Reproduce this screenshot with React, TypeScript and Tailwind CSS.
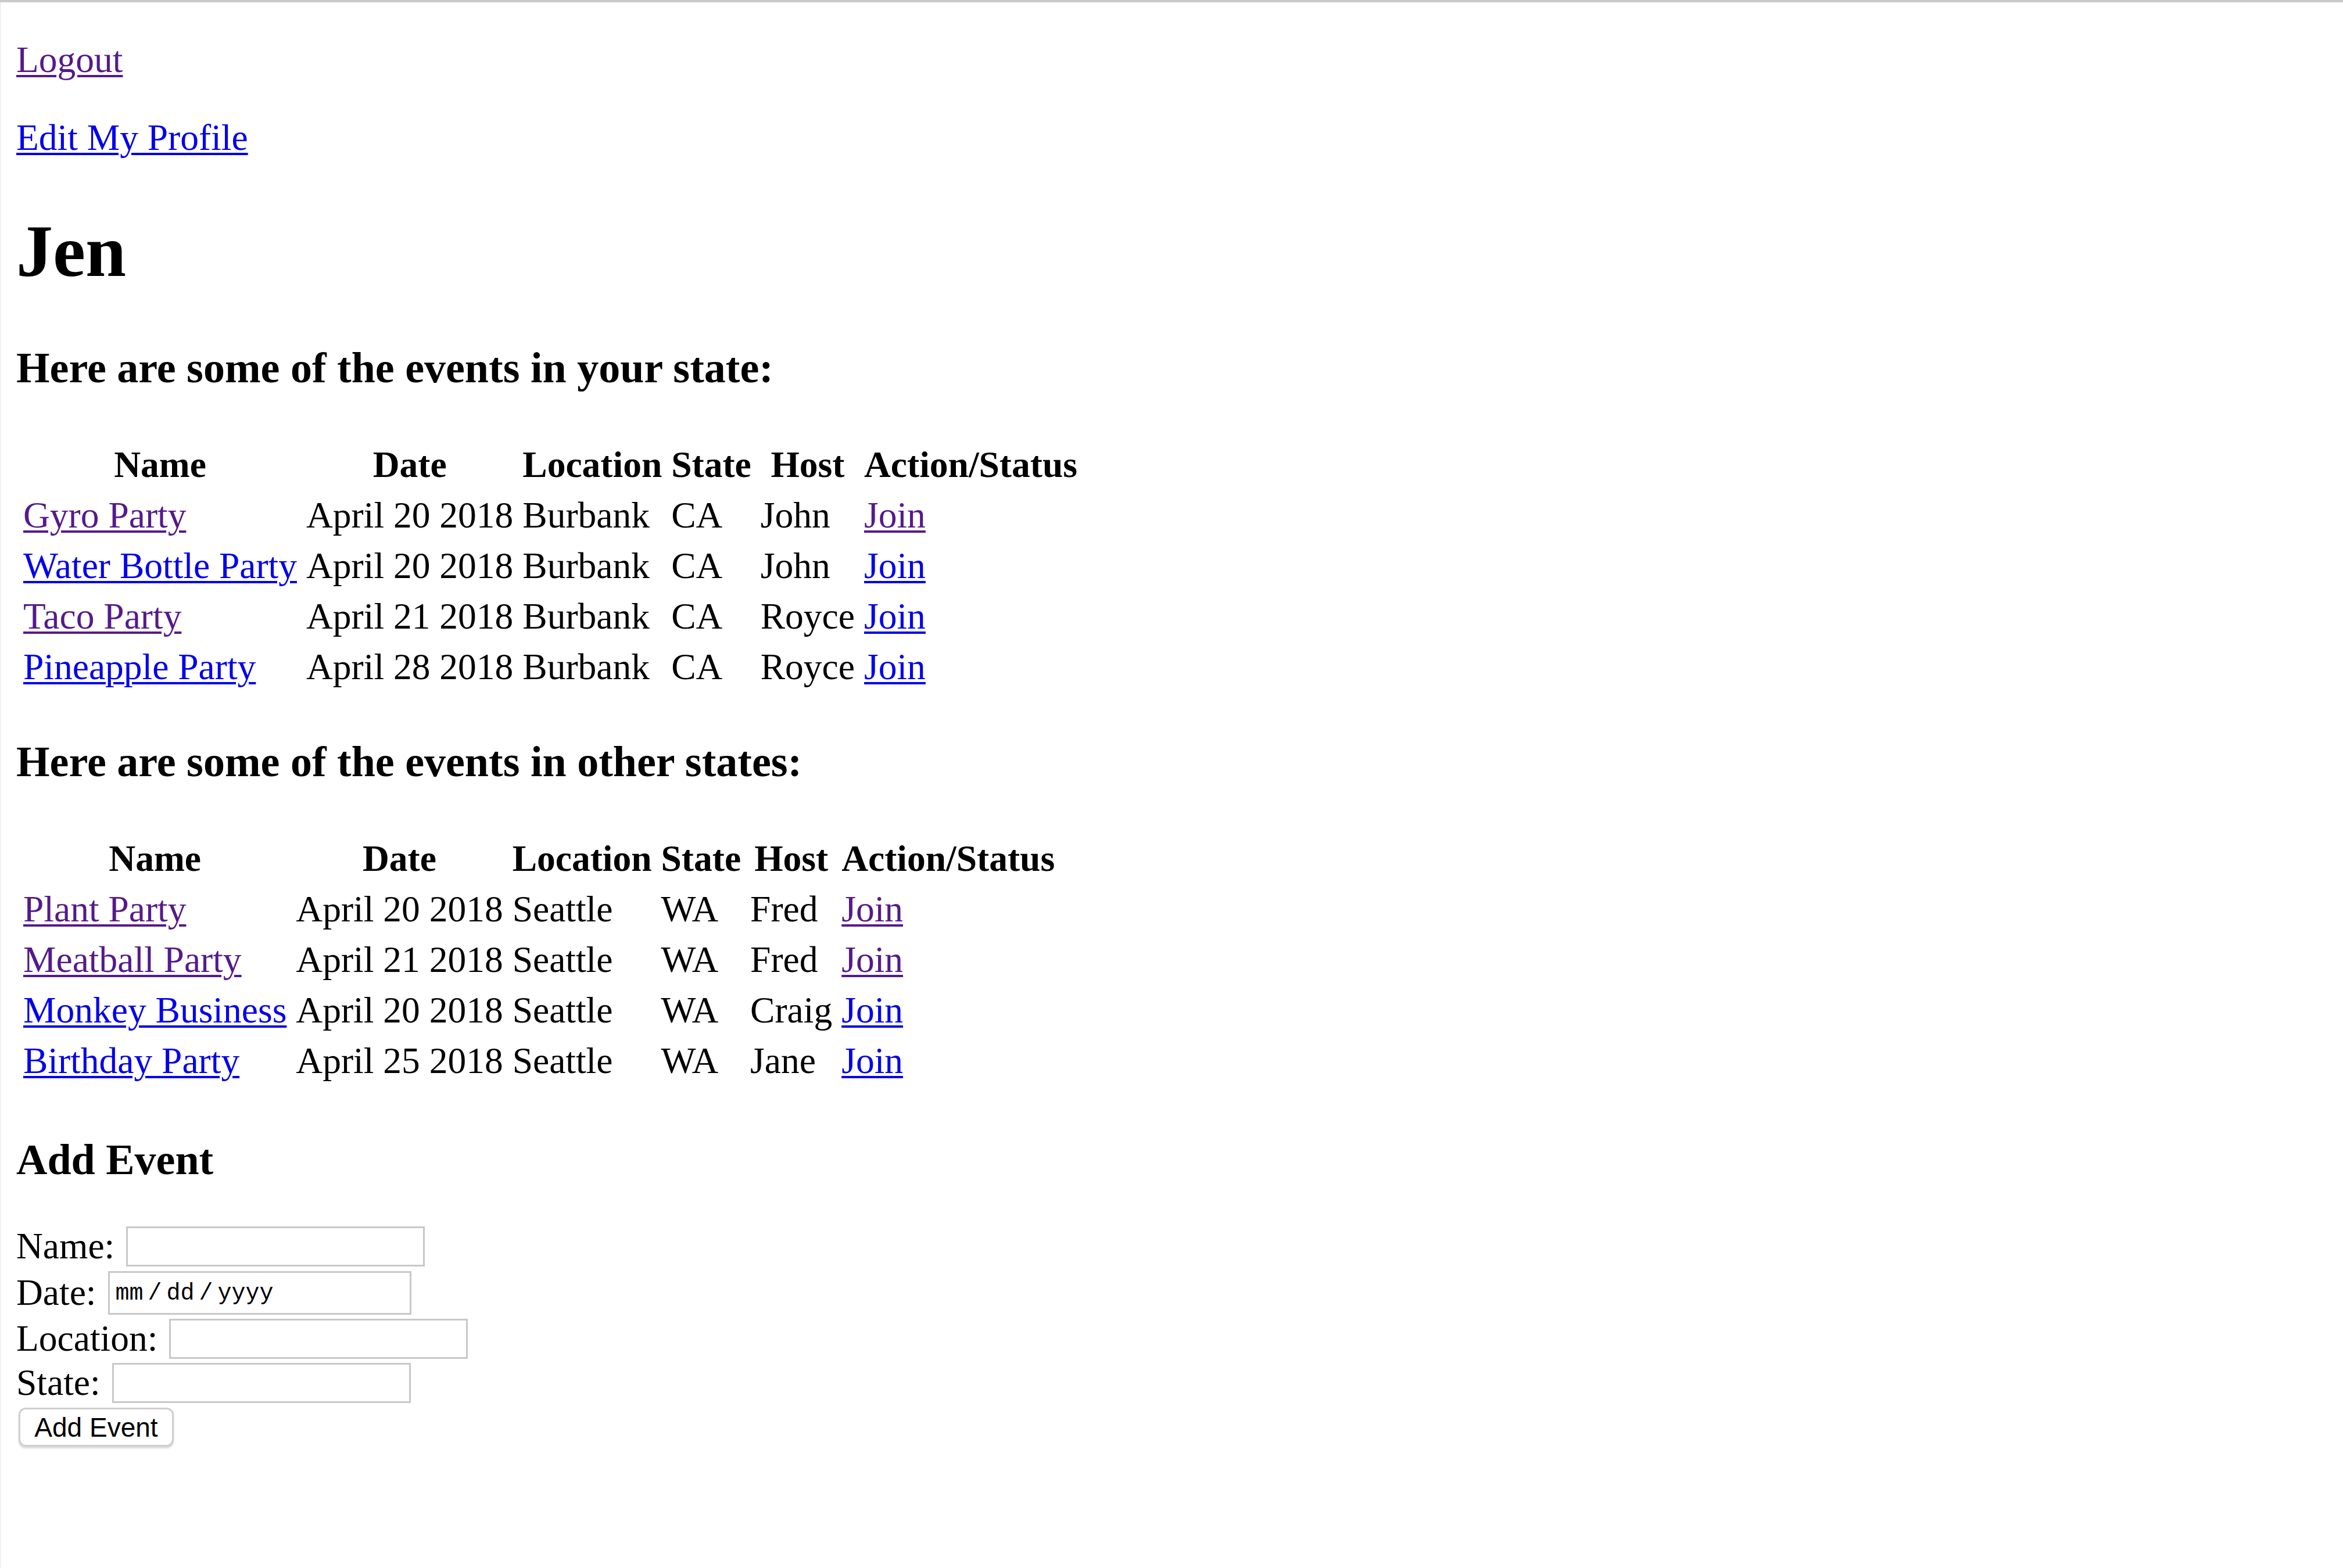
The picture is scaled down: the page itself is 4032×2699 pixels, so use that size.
import React from "react";

const PURPLE = "text-[#551a8b]";
const BLUE = "text-[#0000ee]";

type Row = {
  name: string;
  date: string;
  location: string;
  state: string;
  host: string;
  visitedName: boolean;
  visitedJoin: boolean;
};

const yourState: Row[] = [
  { name: "Gyro Party", date: "April 20 2018", location: "Burbank", state: "CA", host: "John", visitedName: true, visitedJoin: true },
  { name: "Water Bottle Party", date: "April 20 2018", location: "Burbank", state: "CA", host: "John", visitedName: false, visitedJoin: false },
  { name: "Taco Party", date: "April 21 2018", location: "Burbank", state: "CA", host: "Royce", visitedName: true, visitedJoin: false },
  { name: "Pineapple Party", date: "April 28 2018", location: "Burbank", state: "CA", host: "Royce", visitedName: false, visitedJoin: false },
];

const otherStates: Row[] = [
  { name: "Plant Party", date: "April 20 2018", location: "Seattle", state: "WA", host: "Fred", visitedName: true, visitedJoin: true },
  { name: "Meatball Party", date: "April 21 2018", location: "Seattle", state: "WA", host: "Fred", visitedName: true, visitedJoin: true },
  { name: "Monkey Business", date: "April 20 2018", location: "Seattle", state: "WA", host: "Craig", visitedName: false, visitedJoin: false },
  { name: "Birthday Party", date: "April 25 2018", location: "Seattle", state: "WA", host: "Jane", visitedName: false, visitedJoin: false },
];

function Link({ children, visited }: { children: React.ReactNode; visited: boolean }) {
  return (
    <a
      href="#"
      className={`${visited ? PURPLE : BLUE} underline decoration-[4px] underline-offset-[5px] whitespace-nowrap`}
    >
      {children}
    </a>
  );
}

function EventTable({ rows, className }: { rows: Row[]; className: string }) {
  const th = "px-[4px] py-[4px] text-center font-bold whitespace-nowrap";
  const td = "px-[4px] py-[4px] text-left whitespace-nowrap";
  return (
    <table className={`border-separate border-spacing-[8px] leading-[71px] ${className}`}>
      <thead>
        <tr>
          <th className={th}>Name</th>
          <th className={th}>Date</th>
          <th className={th}>Location</th>
          <th className={th}>State</th>
          <th className={th}>Host</th>
          <th className={th}>Action/Status</th>
        </tr>
      </thead>
      <tbody>
        {rows.map((r) => (
          <tr key={r.name}>
            <td className={td}>
              <Link visited={r.visitedName}>{r.name}</Link>
            </td>
            <td className={td}>{r.date}</td>
            <td className={td}>{r.location}</td>
            <td className={td}>{r.state}</td>
            <td className={td}>{r.host}</td>
            <td className={td}>
              <Link visited={r.visitedJoin}>Join</Link>
            </td>
          </tr>
        ))}
      </tbody>
    </table>
  );
}

const inputCls =
  "bg-white border-[3px] border-[#c8c8c8] h-[69px] w-[514px] outline-none";

export default function App() {
  return (
    <div className="min-h-screen bg-white border-t-[4px] border-[#c9c9c9] font-['Liberation_Serif','Times_New_Roman',serif] text-[63.5px] leading-[72px] text-black">
      <div className="min-h-[2695px] border-l border-[#e4e4e4] pl-[27px] pt-[63px] pb-[100px]">
        <p>
          <Link visited={true}>Logout</Link>
        </p>
        <p className="mt-[62px]">
          <Link visited={false}>Edit My Profile</Link>
        </p>

        <h1 className="mt-[88px] text-[126px] leading-[144px] font-bold">Jen</h1>

        <h3 className="mt-[86px] text-[74px] leading-[84px] font-bold">
          Here are some of the events in your state:
        </h3>
        <EventTable rows={yourState} className="mt-[77px]" />

        <h3 className="mt-[74px] text-[74px] leading-[84px] font-bold">
          Here are some of the events in other states:
        </h3>
        <EventTable rows={otherStates} className="mt-[77px]" />

        <h3 className="mt-[81px] text-[74px] leading-[84px] font-bold">Add Event</h3>

        <form className="mt-[68px]" onSubmit={(e) => e.preventDefault()}>
          <div className="flex h-[78px] items-center gap-[20px]">
            <label>Name:</label>
            <input type="text" className={inputCls} />
          </div>
          <div className="flex h-[82px] items-center gap-[20px]">
            <label>Date:</label>
            <div className="flex h-[75px] w-[522px] items-center border-[3px] border-[#c8c8c8] bg-white pl-[10px] pt-[4px] font-['Liberation_Mono',monospace] text-[40px] leading-none">
              <span>mm</span>
              <span className="px-[8px]">/</span>
              <span>dd</span>
              <span className="px-[8px]">/</span>
              <span>yyyy</span>
            </div>
          </div>
          <div className="flex h-[76px] items-center gap-[20px]">
            <label>Location:</label>
            <input type="text" className={inputCls} />
          </div>
          <div className="flex h-[76px] items-center gap-[20px]">
            <label>State:</label>
            <input type="text" className={inputCls} />
          </div>
          <button
            type="submit"
            className="mt-[5px] ml-[4px] flex h-[67px] w-[267px] items-center justify-center rounded-[12px] border-[3px] border-[#cfcfcf] bg-white font-['Liberation_Sans',Arial,sans-serif] text-[46px] leading-none text-black shadow-[0_3px_3px_rgba(0,0,0,0.15)]"
          >
            Add Event
          </button>
        </form>
      </div>
    </div>
  );
}
